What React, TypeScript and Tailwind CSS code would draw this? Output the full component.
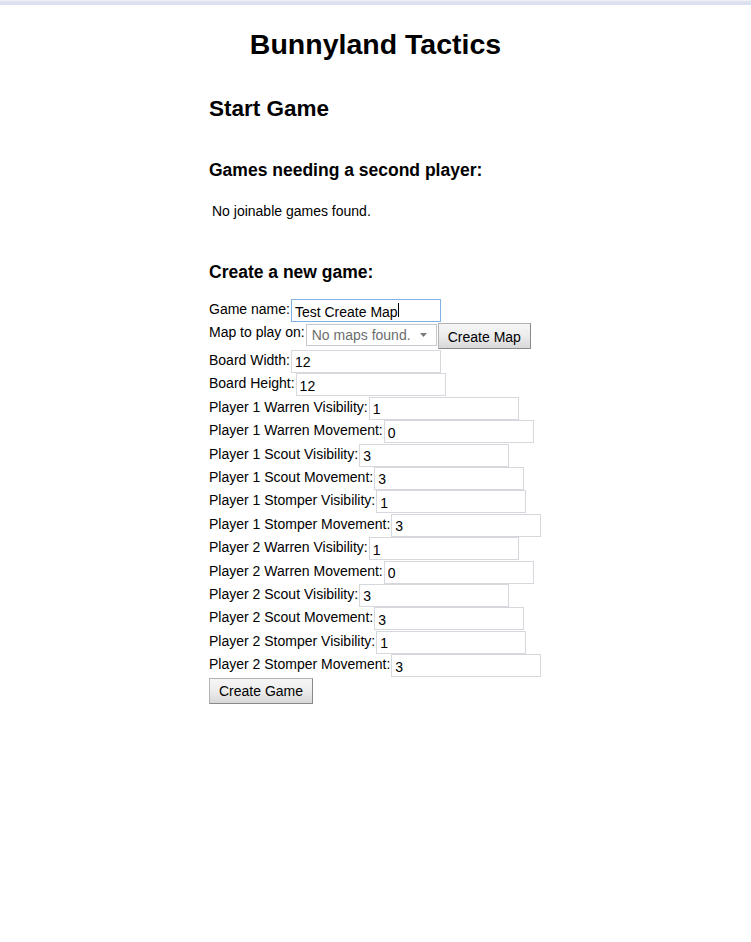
import React from "react";

const fields: [string, string][] = [
  ["Player 1 Warren Visibility:", "1"],
  ["Player 1 Warren Movement:", "0"],
  ["Player 1 Scout Visibility:", "3"],
  ["Player 1 Scout Movement:", "3"],
  ["Player 1 Stomper Visibility:", "1"],
  ["Player 1 Stomper Movement:", "3"],
  ["Player 2 Warren Visibility:", "1"],
  ["Player 2 Warren Movement:", "0"],
  ["Player 2 Scout Visibility:", "3"],
  ["Player 2 Scout Movement:", "3"],
  ["Player 2 Stomper Visibility:", "1"],
  ["Player 2 Stomper Movement:", "3"],
];

function Field({ label, value }: { label: string; value: string }) {
  return (
    <div className="flex h-[23.4px] items-start whitespace-nowrap">
      <label className="mt-[2px] text-[14px] leading-[16px]">{label}</label>
      <input
        readOnly
        defaultValue={value}
        className="ml-px box-border h-[23px] w-[150px] shrink-0 border border-[#d6d8dd] bg-white pb-px pl-[3px] pt-[3px] text-[14px] leading-[16px] text-black outline-none"
      />
    </div>
  );
}

const btn =
  "box-border shrink-0 border border-[#b3b3b3] border-b-[#8a8a8a] border-r-[#8a8a8a] bg-linear-to-b from-[#f6f6f6] via-[#ececec] to-[#d8d8d8] px-[9px] text-[14px] leading-[16px] text-black";

export default function App() {
  return (
    <div className="min-h-[942px] bg-white font-['Liberation_Sans',Arial,sans-serif] text-black">
      <div className="h-px bg-[#eeeff5]" />
      <div className="h-px bg-[#e3e6f0]" />
      <div className="h-[3px] bg-[#dce0f1]" />
      <h1 className="mt-[23px] text-center text-[28.5px] font-bold leading-[32px]">Bunnyland Tactics</h1>
      <div className="mx-auto w-[333px]">
        <h2 className="mt-[36px] text-[22.5px] font-bold leading-[26px]">Start Game</h2>
        <h3 className="mt-[38px] text-[17.5px] font-bold leading-[20px]">Games needing a second player:</h3>
        <p className="mt-[23px] pl-[3px] text-[14px] leading-[16px]">No joinable games found.</p>
        <h3 className="mt-[43px] text-[17.5px] font-bold leading-[20px]">Create a new game:</h3>
        <form className="mt-[17px]" onSubmit={(e) => e.preventDefault()}>
          <div className="flex h-[23.4px] items-start whitespace-nowrap">
            <label className="mt-[2px] text-[14px] leading-[16px]">Game name:</label>
            <div className="relative ml-px shrink-0">
              <input
                readOnly
                defaultValue="Test Create Map"
                className="box-border h-[23px] w-[150px] border border-[#7fb3e6] bg-white pb-px pl-[3px] pt-[3px] text-[14px] leading-[16px] text-black outline-none"
              />
              <span className="absolute left-[107px] top-[4px] h-[14px] w-px bg-black" />
            </div>
          </div>
          <div className="flex h-[27.6px] items-start whitespace-nowrap">
            <label className="mt-[2px] text-[14px] leading-[16px]">Map to play on:</label>
            <div className="ml-px mt-[1.3px] box-border flex h-[22px] w-[131px] shrink-0 items-center justify-between border border-[#c6c8cc] bg-white pl-[5px] pr-[9px] text-[14px] leading-[16px] text-[#6d6d6d]">
              <span>No maps found.</span>
              <svg width="7" height="4" viewBox="0 0 7 4" className="mt-px">
                <path d="M0 0H7L3.5 4Z" fill="#7a7a7a" />
              </svg>
            </div>
            <button type="button" className={btn + " ml-px mt-[0.3px] h-[26px] pt-[3px]"}>Create Map</button>
          </div>
          <Field label="Board Width:" value="12" />
          <Field label="Board Height:" value="12" />
          {fields.map(([l, v]) => (
            <Field key={l} label={l} value={v} />
          ))}
          <button type="submit" className={btn + " mt-px h-[26px]"}>Create Game</button>
        </form>
      </div>
    </div>
  );
}
